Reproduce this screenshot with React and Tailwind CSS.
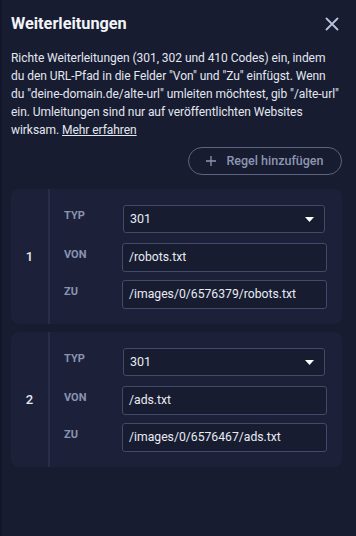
import React from "react";

const rules = [
  { n: 1, von: "/robots.txt", zu: "/images/0/6576379/robots.txt" },
  { n: 2, von: "/ads.txt", zu: "/images/0/6576467/ads.txt" },
];

function Card({ r }) {
  return (
    <div className="flex rounded-lg bg-[#1c2139]">
      <div className="w-[37px] flex items-center justify-center text-[13px] font-medium text-[#e6e9f2]">
        {r.n}
      </div>
      <div className="w-[2px] bg-[#262e4a]" />
      <div className="flex-1 pl-[14px] pr-[15px] pt-[16px] pb-[15px] flex flex-col">
        <div className="flex items-start">
          <div className="w-[58px] pt-[5px] text-[11px] leading-[12px] font-bold text-[#8a93b0]">TYP</div>
          <div className="flex-1 ml-[1px] mr-[2px] h-[28px] rounded-[3px] border border-[#414a66] bg-[#171c30] flex items-center justify-between pl-[6px] pr-[10px]">
            <span className="text-[12.5px] text-[#e8ebf3]">301</span>
            <svg width="9" height="5" viewBox="0 0 9 5"><path d="M0 0h9L4.5 5z" fill="#ffffff" /></svg>
          </div>
        </div>
        <div className="flex items-start mt-[10px]">
          <div className="w-[58px] pt-[6px] text-[11px] leading-[12px] font-bold text-[#8a93b0]">VON</div>
          <div className="flex-1 h-[29px] rounded-[3px] border border-[#414a66] bg-[#171c30] flex items-center pl-[6px]">
            <span className="text-[12.2px] text-[#e8ebf3]">{r.von}</span>
          </div>
        </div>
        <div className="flex items-start mt-[8px]">
          <div className="w-[58px] pt-[6px] text-[11px] leading-[12px] font-bold text-[#8a93b0]">ZU</div>
          <div className="flex-1 h-[29px] rounded-[3px] border border-[#414a66] bg-[#171c30] flex items-center pl-[6px]">
            <span className="text-[12.2px] text-[#e8ebf3]">{r.zu}</span>
          </div>
        </div>
      </div>
    </div>
  );
}

export default function App() {
  return (
    <div
      className="w-[356px] h-[536px] bg-[#171c30] border-l-2 border-[#12162a] pl-[9px] pr-[14px] overflow-hidden"
      style={{ fontFamily: "Roboto, 'Noto Sans', sans-serif" }}
    >
      <div className="flex items-center justify-between pt-[12px] h-[36px]">
        <h1 className="text-[16.3px] leading-[24px] font-bold text-[#f2f4f8]">Weiterleitungen</h1>
        <svg width="14" height="14" viewBox="0 0 14 14" className="mr-[3px]">
          <path d="M1.5 1.5l11 11M12.5 1.5l-11 11" stroke="#b8c2dc" strokeWidth="1.8" strokeLinecap="round" />
        </svg>
      </div>
      <p className="mt-[13px] text-[12px] leading-[18px] tracking-[-0.05px] whitespace-nowrap text-[#e3e7f0]">
        Richte Weiterleitungen (301, 302 und 410 Codes) ein, indem
        <br />
        du den URL-Pfad in die Felder "Von" und "Zu" einfügst. Wenn
        <br />
        du "deine-domain.de/alte-url" umleiten möchtest, gib "/alte-url"
        <br />
        ein. Umleitungen sind nur auf veröffentlichten Websites
        <br />
        wirksam. <span className="underline">Mehr erfahren</span>
      </p>
      <div className="flex justify-end mt-[8px]">
        <button className="h-[28px] w-[154px] rounded-full border border-[#5c657f] flex items-center justify-center gap-[10px] text-[12.5px] font-medium text-[#8d96b1]">
          <svg width="10" height="10" viewBox="0 0 10 10"><path d="M5 0v10M0 5h10" stroke="#8d96b1" strokeWidth="1.3" /></svg>
          <span>Regel hinzufügen</span>
        </button>
      </div>
      <div className="mt-[14px] flex flex-col gap-[8px]">
        {rules.map((r) => (
          <Card key={r.n} r={r} />
        ))}
      </div>
    </div>
  );
}
